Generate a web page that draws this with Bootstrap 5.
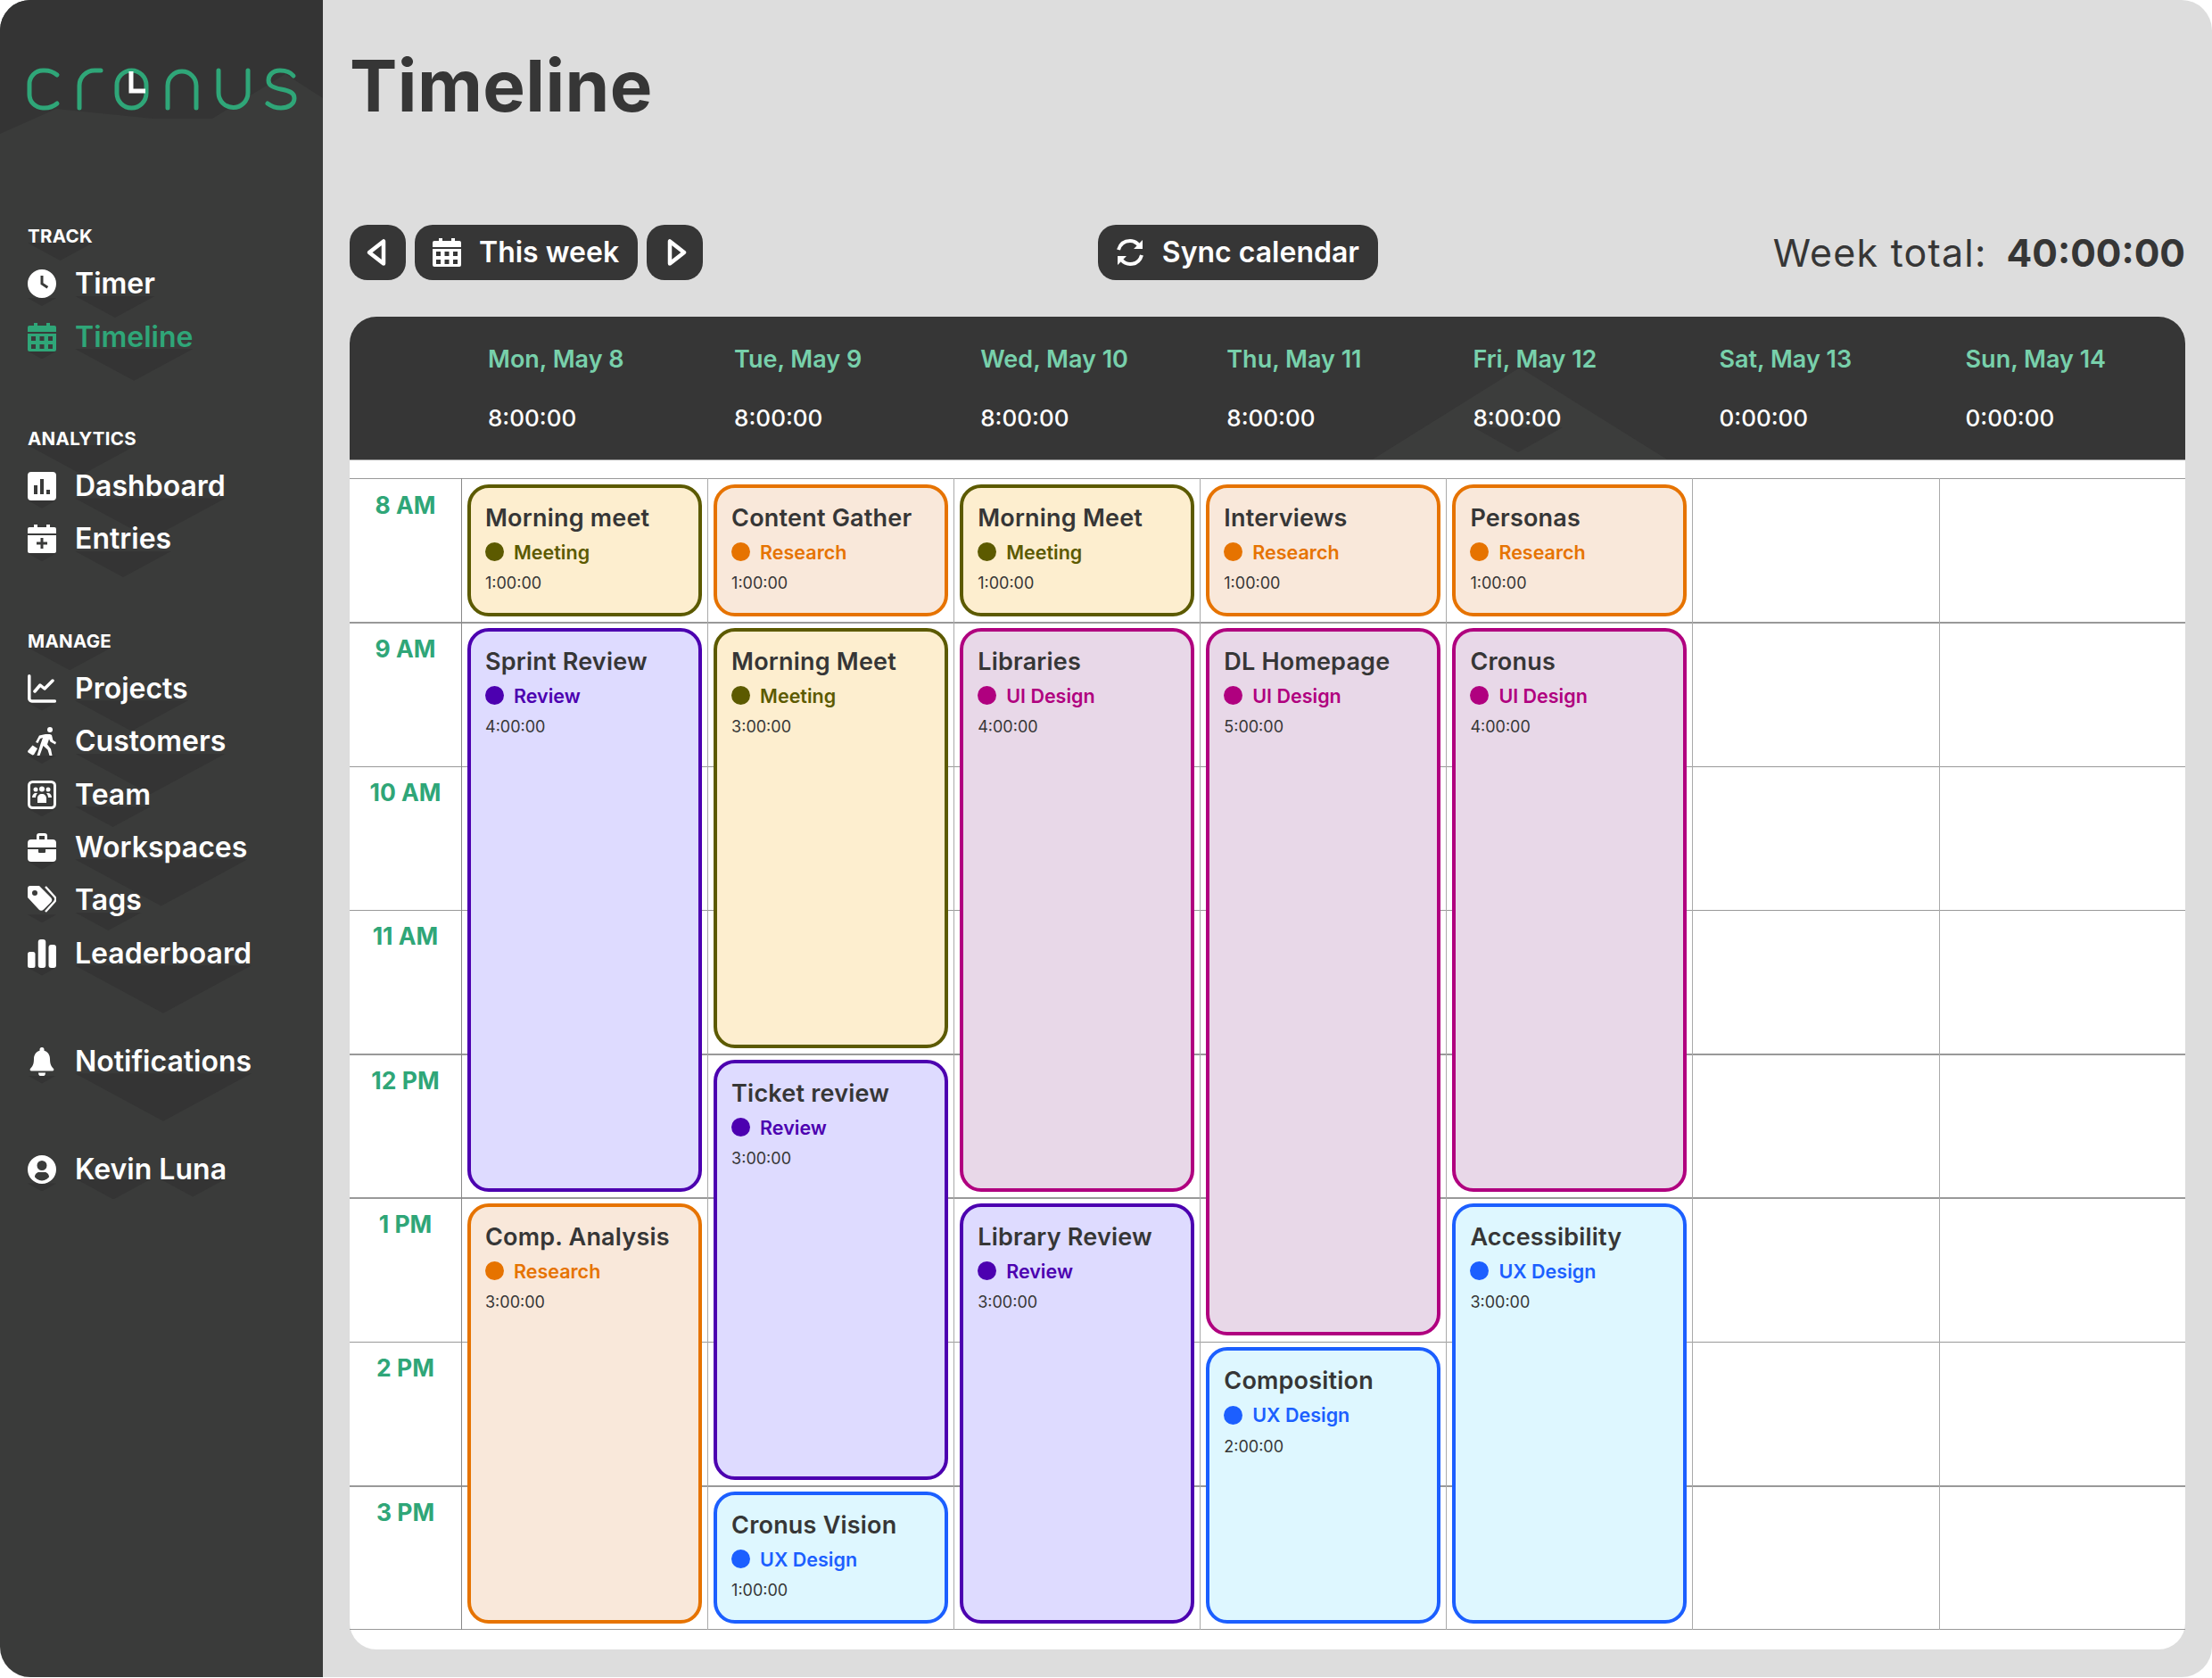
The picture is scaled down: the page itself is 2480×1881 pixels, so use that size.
<!DOCTYPE html>
<html lang="en">
<head>
    <meta charset="UTF-8">
    <meta name="viewport" content="width=device-width, initial-scale=1.0">
    <title>Cronus Timeline</title>
    <link href="https://cdn.jsdelivr.net/npm/bootstrap@5.3.0/dist/css/bootstrap.min.css" rel="stylesheet">
    <style>
        :root {
            --ink: #363636;
            --green: #2fa678;
            --mint: #78d0ab;
            --slot: 161.300px;
        }
        body {
            background-color: #fff;
            font-family: "Inter", "Noto Sans", sans-serif;
            color: var(--ink);
            margin: 0;
        }
        .app-frame {
            width: 2480px;
            height: 1880px;
            border-radius: 34px;
            overflow: hidden;
            background-color: #dddddd;
        }
        /* sidebar */
        .side-panel {
            width: 362px;
            flex: none;
            background-color: #3a3b3a;
            position: relative;
            isolation: isolate;
            color: #fff;
            padding: 0 0 0 31px;
        }
        .side-panel::before {
            content: "";
            position: absolute;
            z-index: -1;
            top: 0;
            left: 0;
            width: 100%;
            height: 160px;
            background-color: #343434;
            clip-path: polygon(0 0, 100% 0, 100% 110px, 320px 83px, 238px 133px, 172px 133px, 63px 122px, 0 150px);
        }
        .brand-logo {
            display: block;
            margin-left: -31px;
            width: 362px;
            height: 252px;
        }
        .side-title {
            font-size: 20.500px;
            line-height: 26px;
            font-weight: 700;
            letter-spacing: .3px;
            height: 26px;
            margin-bottom: 10px;
        }
        .side-group { margin-bottom: 72px; }
        .side-group.is-tight { margin-bottom: 61.600px; }
        .side-link {
            display: flex;
            align-items: center;
            position: relative;
            height: 59.400px;
            padding-top: 1px;
            color: #fff;
            text-decoration: none;
            font-size: 32px;
            font-weight: 600;
        }
        .side-link:hover { color: #fff; }
        .side-link.is-active, .side-link.is-active:hover { color: var(--green); }
        .side-link svg { width: 32px; height: 32px; flex: none; margin-right: 21px; }
        /* small dark notch under each icon */
        .side-link::before {
            content: "";
            position: absolute;
            z-index: -1;
            top: 46px;
            left: 0;
            width: 32px;
            height: 9px;
            background-color: #343434;
            clip-path: polygon(0 0, 100% 0, 50% 100%);
        }
        .chevron-under { position: relative; }
        .chevron-under::after {
            content: "";
            position: absolute;
            z-index: -1;
            top: 78%;
            left: 0;
            width: 100%;
            aspect-ratio: 3.7;
            background-color: #343434;
            clip-path: polygon(0 0, 100% 0, 50% 100%);
        }
        /* main */
        .main-area { padding: 0 30px 0 30px; min-width: 0; }
        .page-heading {
            font-size: 80px;
            font-weight: 700;
            line-height: 100px;
            height: 252px;
            padding-top: 46px;
            margin: 0;
            letter-spacing: .4px;
            color: var(--ink);
        }
        .tool-row { height: 62px; margin-bottom: 41px; }
        .tool-btn {
            height: 62px;
            background-color: var(--ink);
            color: #fff;
            border: 0;
            border-radius: 20px;
            font-size: 32px;
            font-weight: 600;
            padding: 0 21px 0 20px;
            gap: 20px;
        }
        .tool-btn:hover { background-color: #222; color: #fff; }
        .tool-btn svg { width: 32px; height: 32px; flex: none; }
        .tool-btn.is-square { width: 63px; padding: 0; justify-content: center; }
        .tool-group { gap: 10px; }
        .week-sum { font-size: 43px; line-height: 62px; letter-spacing: 1.200px; }
        .week-sum b { font-weight: 700; font-size: 42.500px; margin-left: 22px; letter-spacing: 0; }
        /* timeline */
        .week-head {
            height: 161px;
            background-color: var(--ink);
            border-radius: 30px 30px 0 0;
            border-bottom: 1px solid #999;
            position: relative;
            isolation: isolate;
            overflow: hidden;
            padding-left: 125px;
        }
        .week-head::before {
            content: "";
            position: absolute;
            z-index: -1;
            left: 1147px;
            top: 57px;
            width: 330px;
            height: 103px;
            background-color: #3c3d3c;
            clip-path: polygon(50% 0, 100% 100%, 0 100%);
        }
        .week-head::after {
            content: "";
            position: absolute;
            z-index: -1;
            left: 1260px;
            top: 124px;
            width: 100px;
            height: 28px;
            background-color: var(--ink);
            clip-path: polygon(0 0, 100% 0, 50% 100%);
        }
        .head-cell { width: 276.100px; padding-left: 30px; }
        .head-date { color: var(--mint); font-size: 27px; line-height: 34px; font-weight: 600; margin-top: 31px; }
        .head-sum { color: #fff; font-size: 26px; line-height: 34px; font-weight: 500; margin-top: 32px; }
        .week-body {
            background-color: #fff;
            border-radius: 0 0 30px 30px;
            padding: 19.500px 0 22px;
        }
        .hour-grid {
            height: calc(var(--slot) * 8 + 1.500px);
            background-image: repeating-linear-gradient(to bottom, #999 0, #999 1.500px, transparent 1.500px, transparent var(--slot));
        }
        .hour-col { width: 125px; flex: none; }
        .hour-cell {
            height: var(--slot);
            text-align: center;
            color: var(--green);
            font-size: 26.500px;
            line-height: 34px;
            font-weight: 700;
            padding-top: 13px;
        }
        .day-col { width: 276.100px; flex: none; border-left: 1.500px solid #aaa; }
        .hour-col + .day-col { border-left-color: #888; }
        .slot-box { padding: 7px 6px 6px 6px; flex: none; }
        .span-1 { height: var(--slot); }
        .span-2 { height: calc(var(--slot) * 2); }
        .span-3 { height: calc(var(--slot) * 3); }
        .span-4 { height: calc(var(--slot) * 4); }
        .span-5 { height: calc(var(--slot) * 5); }
        .task-box {
            height: 100%;
            border: 4px solid;
            border-radius: 24px;
            padding: 16px 16px;
            color: var(--task);
            border-color: var(--task);
            background-color: var(--task-bg);
        }
        .task-name { color: var(--ink); font-size: 27px; line-height: 36px; font-weight: 600; letter-spacing: .2px; }
        .task-tag { font-size: 21.500px; line-height: 30px; font-weight: 600; margin-top: 5px; }
        .task-dot { width: 21px; height: 21px; border-radius: 50%; background-color: var(--task); margin-right: 11px; flex: none; }
        .task-time { color: var(--ink); font-size: 18px; line-height: 24px; margin-top: 8.500px; }
        .kind-meeting { --task: #5c5a00; --task-bg: #fdeecf; }
        .kind-research { --task: #e67300; --task-bg: #f9e8da; }
        .kind-review { --task: #4c00b0; --task-bg: #dedbff; }
        .kind-ui { --task: #b0007f; --task-bg: #e8d8e8; }
        .kind-ux { --task: #1c5fff; --task-bg: #def7ff; }
    </style>
</head>
<body>
    <svg width="0" height="0" class="position-absolute">
        <symbol id="ico-calendar" viewBox="0 0 32 32">
            <path fill="currentColor" d="M7 0h4v3h10V0h4v3h5a2 2 0 0 1 2 2v5H0V5a2 2 0 0 1 2-2h5zM0 12h32v18a2 2 0 0 1-2 2H2a2 2 0 0 1-2-2zM4 15v5h5v-5zm9.500 0v5h5v-5zM23 15v5h5v-5zM4 24v5h5v-5zm9.500 0v5h5v-5zM23 24v5h5v-5z" fill-rule="evenodd"/>
        </symbol>
    </svg>

    <div class="app-frame d-flex">
        <!-- Sidebar -->
        <aside class="side-panel">
            <svg class="brand-logo" viewBox="0 0 362 252" fill="none" stroke="#2fa678" stroke-width="5" stroke-linecap="round" role="img" aria-label="cronus">
                <path d="M64 84Q58 79 50 79H48A15 15 0 0 0 33 94V106A15 15 0 0 0 48 121H50Q58 121 64 116"/>
                <path d="M89 121V96A17 17 0 0 1 106 79H113"/>
                <rect x="131" y="79" width="33" height="42" rx="16.500"/>
                <path d="M188 121V96A16 16 0 0 1 220 96V121"/>
                <path d="M245 79V104A16.500 16.500 0 0 0 278 104V79"/>
                <path d="M329 85C325 80 318 79 314 79C305 79 301 85 301 90C301 96 306 98 315 100C325 102 330 104 330 110C330 117 323 121 315 121C309 121 304 119 300 116"/>
                <path d="M147 80V102H163" stroke="#fff" stroke-linecap="butt"/>
            </svg>

            <div class="side-group">
                <div class="side-title"><span class="chevron-under d-inline-block">TRACK</span></div>
                <a class="side-link" href="#">
                    <svg viewBox="0 0 32 32"><path fill="currentColor" fill-rule="evenodd" d="M16 0a16 16 0 1 1 0 32a16 16 0 0 1 0-32zM14.500 7v9.800l7 4.700 1.700-2.500-5.700-3.800V7z"/></svg>
                    <span class="chevron-under">Timer</span>
                </a>
                <a class="side-link is-active" href="#">
                    <svg><use href="#ico-calendar"/></svg>
                    <span class="chevron-under">Timeline</span>
                </a>
            </div>

            <div class="side-group">
                <div class="side-title"><span class="chevron-under d-inline-block">ANALYTICS</span></div>
                <a class="side-link" href="#">
                    <svg viewBox="0 0 32 32"><path fill="currentColor" fill-rule="evenodd" d="M4 0h24a4 4 0 0 1 4 4v24a4 4 0 0 1-4 4H4a4 4 0 0 1-4-4V4a4 4 0 0 1 4-4zM7 15v10h4V15zM14 8v17h4V8zM21 20v5h4v-5z"/></svg>
                    <span class="chevron-under">Dashboard</span>
                </a>
                <a class="side-link" href="#">
                    <svg viewBox="0 0 32 32"><path fill="currentColor" fill-rule="evenodd" d="M7 0h4v3h10V0h4v3h5a2 2 0 0 1 2 2v5H0V5a2 2 0 0 1 2-2h5zM0 12h32v18a2 2 0 0 1-2 2H2a2 2 0 0 1-2-2zM14.500 15v4.500H10v3h4.500V27h3v-4.500H22v-3h-4.500V15z"/></svg>
                    <span class="chevron-under">Entries</span>
                </a>
            </div>

            <div class="side-group is-tight">
                <div class="side-title"><span class="chevron-under d-inline-block">MANAGE</span></div>
                <a class="side-link" href="#">
                    <svg viewBox="0 0 32 32"><path fill="none" stroke="currentColor" stroke-width="3.500" stroke-linecap="round" stroke-linejoin="round" d="M1.800 1.800V27a3 3 0 0 0 3 3h25.500M8 19l6-7 5 4 9-9"/></svg>
                    <span class="chevron-under">Projects</span>
                </a>
                <a class="side-link" href="#">
                    <svg viewBox="0 0 32 32"><circle cx="25" cy="3" r="3" fill="currentColor"/><path fill="currentColor" d="M20 8h5l2 1 1.500 6 3.500 2-1 2.500-5.500-3-1.500-3-2 6 4 5 1.500 7.500h-3l-2-6.500-5-4.500-4 11h-3l4-13 2.500-7-3 1-2.500 5-2.500-1 4-7.500z"/><path fill="currentColor" d="M5.500 20.500l5.500 3.500-4 7-1.500.5-5-3-.500-1.500z"/></svg>
                    <span class="chevron-under">Customers</span>
                </a>
                <a class="side-link" href="#">
                    <svg viewBox="0 0 32 32"><rect x="1.500" y="1.500" width="29" height="29" rx="4" fill="none" stroke="currentColor" stroke-width="3"/><circle cx="9" cy="10" r="2.500" fill="currentColor"/><circle cx="16" cy="9.500" r="3" fill="currentColor"/><circle cx="23" cy="10" r="2.500" fill="currentColor"/><path fill="currentColor" d="M5 19c0-3 2-5 4-5h2c-1 1-2 3-2 5zM27 19c0-3-2-5-4-5h-2c1 1 2 3 2 5zM11 25v-5c0-3 2-5 5-5s5 2 5 5v5z"/></svg>
                    <span class="chevron-under">Team</span>
                </a>
                <a class="side-link" href="#">
                    <svg viewBox="0 0 32 32"><path fill="currentColor" fill-rule="evenodd" d="M10 7V3a3 3 0 0 1 3-3h6a3 3 0 0 1 3 3v4h6a4 4 0 0 1 4 4v5H0v-5a4 4 0 0 1 4-4zM13 3v4h6V3zM0 18h12v3a1 1 0 0 0 1 1h6a1 1 0 0 0 1-1v-3h12v10a4 4 0 0 1-4 4H4a4 4 0 0 1-4-4z"/></svg>
                    <span class="chevron-under">Workspaces</span>
                </a>
                <a class="side-link" href="#">
                    <svg viewBox="0 0 32 32"><path fill="currentColor" fill-rule="evenodd" d="M3 0h10l13 13a4 4 0 0 1 0 5.500L18 26.500a4 4 0 0 1-5.500 0L0 13V3a3 3 0 0 1 3-3zM8 5a3 3 0 1 0 0 6a3 3 0 0 0 0-6z"/><path fill="none" stroke="currentColor" stroke-width="2.400" d="M20 1l10 11a4.500 4.500 0 0 1 0 6L20 29"/></svg>
                    <span class="chevron-under">Tags</span>
                </a>
                <a class="side-link" href="#">
                    <svg viewBox="0 0 32 32"><rect x="0" y="14" width="8.500" height="18" rx="2.500" fill="currentColor"/><rect x="11.750" y="0" width="8.500" height="32" rx="3" fill="currentColor"/><rect x="23.500" y="6" width="8.500" height="26" rx="3" fill="currentColor"/></svg>
                    <span class="chevron-under">Leaderboard</span>
                </a>
            </div>

            <div class="side-group is-tight">
                <a class="side-link" href="#">
                    <svg viewBox="0 0 32 32"><path fill="currentColor" d="M16 0a2.500 2.500 0 0 1 2.500 2.500v1.300C22.500 5 25 8.500 25 13c0 6 1.500 8.500 4 11 .8 1 .3 2.500-1 2.500H4c-1.300 0-1.800-1.500-1-2.500 2.500-2.500 4-5 4-11 0-4.500 2.500-8 6.500-9.200V2.500A2.500 2.500 0 0 1 16 0zM12 28.500h8a4 4 0 0 1-8 0z"/></svg>
                    <span class="chevron-under">Notifications</span>
                </a>
            </div>

            <a class="side-link" href="#">
                <svg viewBox="0 0 32 32"><path fill="currentColor" fill-rule="evenodd" d="M16 0a16 16 0 1 1 0 32a16 16 0 0 1 0-32zM16 6a5.500 5.500 0 1 0 0 11a5.500 5.500 0 0 0 0-11zM8 24c0 1 4 4.500 8 4.500s8-3.500 8-4.500c0-2.500-2.500-5-4.500-5h-7C10.500 19 8 21.500 8 24z"/></svg>
                <span><span class="chevron-under">Kevin</span> <span class="chevron-under">Luna</span></span>
            </a>
        </aside>

        <!-- Main content -->
        <main class="main-area flex-grow-1">
            <h1 class="page-heading">Timeline</h1>

            <div class="tool-row d-flex justify-content-between align-items-center">
                <div class="tool-group d-flex">
                    <button class="btn tool-btn is-square d-flex align-items-center" aria-label="Previous week">
                        <svg viewBox="0 0 32 32"><path fill="none" stroke="#fff" stroke-width="4.500" stroke-linejoin="round" d="M22 3.500V28.500L6 16z"/></svg>
                    </button>
                    <button class="btn tool-btn d-flex align-items-center">
                        <svg><use href="#ico-calendar"/></svg>This week
                    </button>
                    <button class="btn tool-btn is-square d-flex align-items-center" aria-label="Next week">
                        <svg viewBox="0 0 32 32"><path fill="none" stroke="#fff" stroke-width="4.500" stroke-linejoin="round" d="M10 3.500V28.500L26 16z"/></svg>
                    </button>
                </div>
                <button class="btn tool-btn d-flex align-items-center">
                    <svg viewBox="0 0 32 32"><path fill="none" stroke="#fff" stroke-width="4" d="M3 13C5 6 10 3 16 3c4 0 7.500 2 10 5M29 19c-2 7-7 10-13 10-4 0-7.500-2-10-5"/><path fill="#fff" d="M30 2v10H20zM2 30V20h10z"/></svg>Sync calendar
                </button>
                <div class="week-sum">Week total:<b>40:00:00</b></div>
            </div>

            <div class="week-head d-flex">
                <div class="head-cell"><div class="head-date">Mon, May 8</div><div class="head-sum">8:00:00</div></div>
                <div class="head-cell"><div class="head-date">Tue, May 9</div><div class="head-sum">8:00:00</div></div>
                <div class="head-cell"><div class="head-date">Wed, May 10</div><div class="head-sum">8:00:00</div></div>
                <div class="head-cell"><div class="head-date">Thu, May 11</div><div class="head-sum">8:00:00</div></div>
                <div class="head-cell"><div class="head-date">Fri, May 12</div><div class="head-sum">8:00:00</div></div>
                <div class="head-cell"><div class="head-date">Sat, May 13</div><div class="head-sum">0:00:00</div></div>
                <div class="head-cell"><div class="head-date">Sun, May 14</div><div class="head-sum">0:00:00</div></div>
            </div>

            <div class="week-body">
                <div class="hour-grid d-flex" id="hourGrid">
                    <div class="hour-col">
                        <div class="hour-cell">8 AM</div>
                        <div class="hour-cell">9 AM</div>
                        <div class="hour-cell">10 AM</div>
                        <div class="hour-cell">11 AM</div>
                        <div class="hour-cell">12 PM</div>
                        <div class="hour-cell">1 PM</div>
                        <div class="hour-cell">2 PM</div>
                        <div class="hour-cell">3 PM</div>
                    </div>
                </div>
            </div>
        </main>
    </div>

    <script>
        // name, kind label, css kind, hours
        const KINDS = {
            meeting: "Meeting",
            research: "Research",
            review: "Review",
            ui: "UI Design",
            ux: "UX Design"
        };
        const days = [
            [["Morning meet", "meeting", 1], ["Sprint Review", "review", 4], ["Comp. Analysis", "research", 3]],
            [["Content Gather", "research", 1], ["Morning Meet", "meeting", 3], ["Ticket review", "review", 3], ["Cronus Vision", "ux", 1]],
            [["Morning Meet", "meeting", 1], ["Libraries", "ui", 4], ["Library Review", "review", 3]],
            [["Interviews", "research", 1], ["DL Homepage", "ui", 5], ["Composition", "ux", 2]],
            [["Personas", "research", 1], ["Cronus", "ui", 4], ["Accessibility", "ux", 3]],
            [],
            []
        ];

        const grid = document.getElementById("hourGrid");
        days.forEach(tasks => {
            const boxes = tasks.map(([name, kind, hours]) => `
                <div class="slot-box span-${hours}">
                    <div class="task-box kind-${kind}">
                        <div class="task-name">${name}</div>
                        <div class="task-tag d-flex align-items-center"><span class="task-dot"></span>${KINDS[kind]}</div>
                        <div class="task-time">${hours}:00:00</div>
                    </div>
                </div>`).join("");
            grid.insertAdjacentHTML("beforeend", `<div class="day-col d-flex flex-column">${boxes}</div>`);
        });
    </script>
    <script src="https://cdn.jsdelivr.net/npm/bootstrap@5.3.0/dist/js/bootstrap.bundle.min.js"></script>
</body>
</html>
